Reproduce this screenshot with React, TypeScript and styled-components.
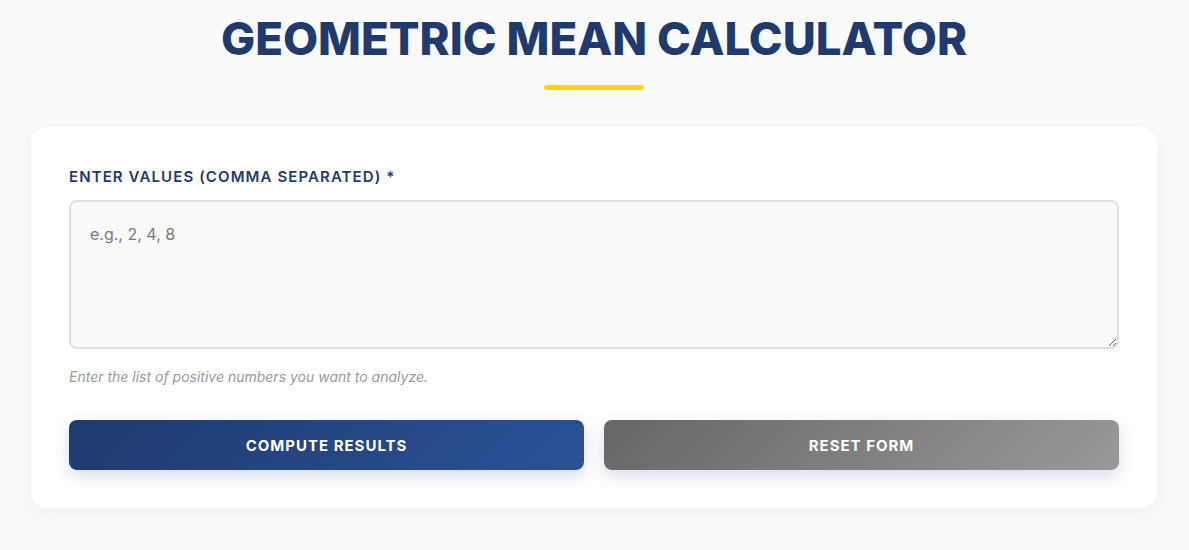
import React from "react";
import styled, { createGlobalStyle } from "styled-components";

const Global = createGlobalStyle`
  html, body { margin: 0; padding: 0; background: #fafafa; }
  body { font-family: "Inter", "Liberation Sans", sans-serif; }
  * { box-sizing: border-box; }
`;

const Page = styled.div`
  padding: 13px 32px 40px 31px;
  display: flex;
  flex-direction: column;
  align-items: stretch;
`;

const Header = styled.header`
  display: flex;
  flex-direction: column;
  align-items: center;
  gap: 20px;
  margin-bottom: 37px;
`;

const Title = styled.h1`
  margin: 0;
  font-family: "Inter", "Liberation Sans", sans-serif;
  font-weight: 800;
  font-size: 45.5px;
  line-height: 52px;
  letter-spacing: 0;
  color: #1f3a6e;
  text-transform: uppercase;
`;

const Underline = styled.div`
  width: 100px;
  height: 5px;
  border-radius: 3px;
  background: #ffd700;
`;

const Card = styled.section`
  background: #ffffff;
  border-radius: 16px;
  box-shadow: 0 4px 20px rgba(0, 0, 0, 0.05);
  padding: 40px 38px 38px;
  display: flex;
  flex-direction: column;
`;

const Label = styled.label`
  font-family: "Inter", "Liberation Sans", sans-serif;
  font-weight: 600;
  font-size: 15px;
  letter-spacing: 1.1px;
  color: #1f3a6e;
  text-transform: uppercase;
  line-height: 20px;
  margin-bottom: 13px;
`;

const TextArea = styled.textarea`
  width: 100%;
  height: 149px;
  border: 2px solid #e0e0e0;
  border-radius: 8px;
  background: #f9f9f9;
  padding: 22px 19px;
  font-family: "Inter", "Liberation Sans", sans-serif;
  font-size: 16px;
  color: #333;
  outline: none;
  resize: vertical;
  &::placeholder { color: #7a7a7a; }
`;

const Hint = styled.p`
  margin: 19px 0 0;
  font-family: "Inter", "Liberation Sans", sans-serif;
  font-style: italic;
  font-size: 14px;
  color: #9a9a9a;
`;

const Buttons = styled.div`
  display: grid;
  grid-template-columns: 1fr 1fr;
  gap: 20px;
  margin-top: 35px;
`;

const Button = styled.button<{ $variant: "primary" | "secondary" }>`
  height: 50px;
  border: none;
  border-radius: 8px;
  color: #ffffff;
  font-family: "Inter", "Liberation Sans", sans-serif;
  font-weight: 700;
  font-size: 15px;
  letter-spacing: 1px;
  text-transform: uppercase;
  cursor: pointer;
  background: ${(p) =>
    p.$variant === "primary"
      ? "linear-gradient(135deg, #1f3a6e 0%, #2a5298 100%)"
      : "linear-gradient(135deg, #666666 0%, #999999 100%)"};
  box-shadow: 0 6px 16px rgba(30, 60, 140, 0.18);
`;

export default function App() {
  return (
    <>
      <Global />
      <Page>
        <Header>
          <Title>Geometric Mean Calculator</Title>
          <Underline />
        </Header>
        <Card>
          <Label htmlFor="values">Enter Values (Comma Separated) *</Label>
          <TextArea id="values" placeholder="e.g., 2, 4, 8" />
          <Hint>Enter the list of positive numbers you want to analyze.</Hint>
          <Buttons>
            <Button $variant="primary">Compute Results</Button>
            <Button $variant="secondary">Reset Form</Button>
          </Buttons>
        </Card>
      </Page>
    </>
  );
}
